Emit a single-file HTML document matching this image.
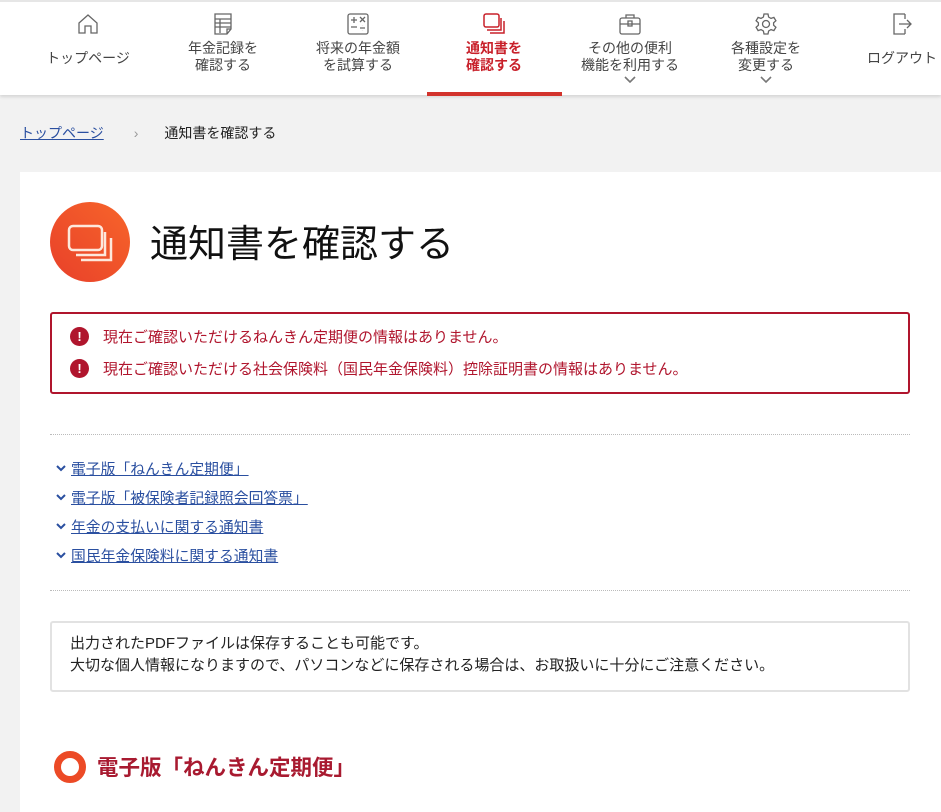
<!DOCTYPE html>
<html><head><meta charset="utf-8"><style>
*{margin:0;padding:0;box-sizing:border-box}
body{width:941px;height:795px;overflow:hidden;background:#f2f2f2;font-family:"Liberation Sans","Noto Sans CJK JP",sans-serif;color:#333;position:relative}
.hdr{position:absolute;left:0;top:0;width:941px;height:95px;background:#fff;border-top:2px solid #e6e6e6;box-shadow:0 2px 3px rgba(0,0,0,.12)}
.nav{position:absolute;top:0;width:136px;text-align:center;font-size:14px;line-height:17px;color:#444}
.nav svg{display:block;margin:10px auto 4px}
.nav.act{color:#c8202a;font-weight:bold}
.ul{position:absolute;left:427px;top:90px;width:135px;height:4px;background:#d2332c}
.chev{display:block;margin:0 auto}
.bc{position:absolute;top:123px;left:20px;font-size:14px}
.bc a{color:#2a4fa0;text-decoration:underline}
.card{position:absolute;left:20px;top:172px;width:921px;height:640px;background:#fff}
h1{position:absolute;left:150px;top:213px;font-size:38px;font-weight:normal;color:#111}
.err{position:absolute;left:50px;top:312px;width:860px;height:82px;border:2px solid #b0152d;border-radius:3px;color:#b0152d;font-size:15px}
.err div{position:absolute;left:18px;display:flex;align-items:center}
.err i{display:inline-block;width:19px;height:19px;border-radius:50%;background:#b0152d;color:#fff;font-style:normal;font-weight:bold;font-size:13px;text-align:center;line-height:19px;margin-right:14px}
.hr{position:absolute;left:50px;width:860px;border-top:1px dotted #bbb}
.lk{position:absolute;left:56px;font-size:14.8px;color:#2a4fa0;display:flex;align-items:center}
.lk span{text-decoration:underline;margin-left:5px}
.note{position:absolute;left:50px;top:621px;width:860px;height:71px;border:2px solid #e2e2e2;border-radius:3px;padding:10px 18px;font-size:15px;line-height:22px;color:#222}
</style></head><body>
<div class="hdr">
 <div class="nav" style="left:20px"><svg width="24" height="24" viewBox="0 0 24 24" fill="none" stroke="#666" stroke-width="1.3"><path d="M3 11L12 3l9 8v10h-6v-7H9v7H3z"/></svg><div style="margin-top:14px">トップページ</div></div>
 <div class="nav" style="left:155px"><svg width="24" height="24" viewBox="0 0 24 24" fill="none" stroke="#666" stroke-width="1.3"><path d="M4 2h16v15l-4 5H4z M4 7h16 M4 11h16 M4 15h16 M9 7v14 M16 22v-5h4"/></svg>年金記録を<br>確認する</div>
 <div class="nav" style="left:290px"><svg width="24" height="24" viewBox="0 0 24 24" fill="none" stroke="#666" stroke-width="1.3"><rect x="2" y="2" width="20" height="20" rx="2"/><path d="M5 8h6M8 5v6M14 5l5 5M19 5l-5 5M5 15h6M14 16h5M16.5 13.5v.1M16.5 18.5v.1"/></svg>将来の年金額<br>を試算する</div>
 <div class="nav act" style="left:426px"><svg width="24" height="24" viewBox="0 0 24 24" fill="none" stroke="#c8202a" stroke-width="1.5"><rect x="2" y="2" width="15" height="13" rx="2"/><path d="M5 18h14V6M8 21h14V9"/></svg>通知書を<br>確認する</div>
 <div class="nav" style="left:562px"><svg width="24" height="24" viewBox="0 0 24 24" fill="none" stroke="#666" stroke-width="1.3"><rect x="2" y="6" width="20" height="16" rx="2"/><path d="M8 6V3h8v3M2 12h20M10 9h4v5h-4z"/></svg>その他の便利<br>機能を利用する<svg class="chev" style="margin:2px auto" width="12" height="7" viewBox="0 0 12 7" fill="none" stroke="#777" stroke-width="1.6"><path d="M1 1l5 5 5-5"/></svg></div>
 <div class="nav" style="left:698px"><svg width="24" height="24" viewBox="0 0 24 24" fill="none" stroke="#666" stroke-width="1.3"><circle cx="12" cy="12" r="3.5"/><path d="M10 2h4l.6 3 2.4 1.4 2.9-1 2 3.4-2.3 2v2.4l2.3 2-2 3.4-2.9-1L14.6 19l-.6 3h-4l-.6-3L7 17.6l-2.9 1-2-3.4 2.3-2v-2.4l-2.3-2 2-3.4 2.9 1L9.4 5z"/></svg>各種設定を<br>変更する<svg class="chev" style="margin:2px auto" width="12" height="7" viewBox="0 0 12 7" fill="none" stroke="#777" stroke-width="1.6"><path d="M1 1l5 5 5-5"/></svg></div>
 <div class="nav" style="left:834px"><svg width="24" height="24" viewBox="0 0 24 24" fill="none" stroke="#666" stroke-width="1.3"><path d="M15 2H4v20h11M15 7v-5M15 17v5M9 12h12M17 8l4 4-4 4"/></svg><div style="margin-top:14px">ログアウト</div></div>
 <div class="ul"></div>
</div>
<div class="bc"><a>トップページ</a><span style="color:#999;margin:0 26px 0 30px">›</span><span style="color:#222">通知書を確認する</span></div>
<div class="card"></div>
<svg style="position:absolute;left:50px;top:202px" width="80" height="80" viewBox="0 0 80 80"><defs><linearGradient id="g" x1="0" y1="1" x2="1" y2="0"><stop offset="0" stop-color="#e8402a"/><stop offset="1" stop-color="#f7652a"/></linearGradient></defs><circle cx="40" cy="40" r="40" fill="url(#g)"/><g fill="none" stroke="#fde8dc" stroke-width="2.5"><rect x="19" y="24" width="33" height="24" rx="4"/><path d="M26 53h29V30M31 58h30V36"/></g></svg>
<h1>通知書を確認する</h1>
<div class="err"><div style="top:12px"><i>!</i>現在ご確認いただけるねんきん定期便の情報はありません。</div><div style="top:44px"><i>!</i>現在ご確認いただける社会保険料（国民年金保険料）控除証明書の情報はありません。</div></div>
<div class="hr" style="top:434px"></div>
<div class="lk" style="top:458px"><svg width="10" height="7" viewBox="0 0 10 7" fill="none" stroke="#2a4fa0" stroke-width="2"><path d="M1 1l4 4 4-4"/></svg><span>電子版「ねんきん定期便」</span></div>
<div class="lk" style="top:487px"><svg width="10" height="7" viewBox="0 0 10 7" fill="none" stroke="#2a4fa0" stroke-width="2"><path d="M1 1l4 4 4-4"/></svg><span>電子版「被保険者記録照会回答票」</span></div>
<div class="lk" style="top:516px"><svg width="10" height="7" viewBox="0 0 10 7" fill="none" stroke="#2a4fa0" stroke-width="2"><path d="M1 1l4 4 4-4"/></svg><span>年金の支払いに関する通知書</span></div>
<div class="lk" style="top:545px"><svg width="10" height="7" viewBox="0 0 10 7" fill="none" stroke="#2a4fa0" stroke-width="2"><path d="M1 1l4 4 4-4"/></svg><span>国民年金保険料に関する通知書</span></div>
<div class="hr" style="top:590px"></div>
<div class="note">出力されたPDFファイルは保存することも可能です。<br>大切な個人情報になりますので、パソコンなどに保存される場合は、お取扱いに十分にご注意ください。</div>
<div style="position:absolute;left:54px;top:751px;width:32px;height:32px;border-radius:50%;border:7px solid #ec4a26"></div>
<div style="position:absolute;left:97px;top:751px;font-size:21.5px;font-weight:bold;color:#a81a30">電子版「ねんきん定期便」</div>
</body></html>
